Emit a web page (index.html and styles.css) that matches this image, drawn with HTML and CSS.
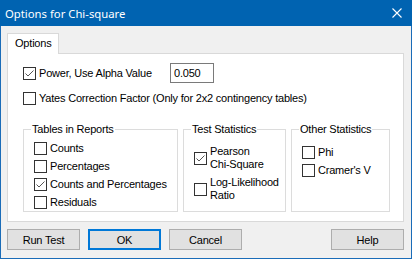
FILE: index.html
```html
<!DOCTYPE html>
<html lang="en">
<head>
    <meta charset="UTF-8">
    <title>Options for Chi-square</title>
    <link rel="stylesheet" href="styles.css">
</head>
<body>

    <div class="window">
        <div class="titlebar">
            <span class="title">Options for Chi-square</span>
            <svg class="close" width="10" height="10" viewBox="0 0 10 10">
                <path d="M0.5 0.5 L9.5 9.5 M9.5 0.5 L0.5 9.5" stroke="#fff" stroke-width="1.1" fill="none"/>
            </svg>
        </div>

        <div class="client">
            <div class="tabs">
                <div class="tab">Options</div>
            </div>

            <div class="panel">
                <div class="row first">
                    <label class="check power">
                        <span class="box"><svg width="11" height="11" viewBox="0 0 11 11"><path d="M1.5 5.5 L4 8 L9.5 2.5" stroke="#555" stroke-width="1" fill="none"/></svg></span>
                        Power, Use Alpha Value
                    </label>
                    <input class="num" type="text" value="0.050">
                </div>
                <div class="row second">
                    <label class="check"><span class="box"></span>Yates Correction Factor (Only for 2x2 contingency tables)</label>
                </div>

                <div class="groups">
                    <fieldset class="group tables">
                        <legend>Tables in Reports</legend>
                        <label class="check item"><span class="box"></span>Counts</label>
                        <label class="check item"><span class="box"></span>Percentages</label>
                        <label class="check item">
                            <span class="box"><svg width="11" height="11" viewBox="0 0 11 11"><path d="M1.5 5.5 L4 8 L9.5 2.5" stroke="#555" stroke-width="1" fill="none"/></svg></span>
                            Counts and Percentages
                        </label>
                        <label class="check item"><span class="box"></span>Residuals</label>
                    </fieldset>

                    <fieldset class="group stats">
                        <legend>Test Statistics</legend>
                        <label class="check tall">
                            <span class="box"><svg width="11" height="11" viewBox="0 0 11 11"><path d="M1.5 5.5 L4 8 L9.5 2.5" stroke="#555" stroke-width="1" fill="none"/></svg></span>
                            <span>Pearson<br>Chi-Square</span>
                        </label>
                        <label class="check tall"><span class="box"></span><span>Log-Likelihood<br>Ratio</span></label>
                    </fieldset>

                    <fieldset class="group other">
                        <legend>Other Statistics</legend>
                        <label class="check item"><span class="box"></span>Phi</label>
                        <label class="check item"><span class="box"></span>Cramer's V</label>
                    </fieldset>
                </div>
            </div>

            <div class="buttons">
                <button>Run Test</button>
                <button class="default">OK</button>
                <button>Cancel</button>
                <button class="help">Help</button>
            </div>
        </div>
    </div>

</body>
</html>
```

FILE: styles.css
```css
/* Windows style dialog */
body {
    margin: 0;
    font-family: "Liberation Sans", Arial, sans-serif;
    font-size: 11px;
    letter-spacing: -0.2px;
    color: #000;
    background-color: #f0f0f0;
}

.window {
    width: 412px;
    height: 259px;
    box-sizing: border-box;
    border: 1px solid #1a6cb8;
    border-top: none;
    background-color: #f0f0f0;
}

.titlebar {
    height: 26px;
    margin: 0 -1px;
    padding: 0 10px 0 5px;
    background-color: #0063b1;
    display: flex;
    align-items: center;
    justify-content: space-between;
}

.titlebar .title {
    color: #fff;
    font-family: "Noto Sans", "Open Sans", sans-serif;
    font-size: 11.3px;
    letter-spacing: 0;
}

.client {
    padding: 7px 0 0 6px;
}

.tabs {
    display: flex;
    height: 20px;
}

.tab {
    width: 52px;
    height: 21px;
    box-sizing: border-box;
    border: 1px solid #d9d9d9;
    border-bottom: none;
    background-color: #fff;
    padding: 2px 0 0 7px;
    line-height: 14px;
    position: relative;
    z-index: 1;
}

.panel {
    width: 397px;
    height: 169px;
    box-sizing: border-box;
    border: 1px solid #d9d9d9;
    background-color: #fff;
    padding: 9px 0 0 15px;
}

.row {
    display: flex;
    align-items: center;
}

.row.first {
    height: 20px;
}

.row.second {
    height: 18px;
    margin-top: 6px;
}

.check {
    display: flex;
    align-items: center;
    white-space: nowrap;
    line-height: 13px;
}

.check.power {
    width: 147px;
}

.box {
    width: 13px;
    height: 13px;
    box-sizing: border-box;
    border: 1px solid #333;
    background-color: #fff;
    margin-right: 3px;
    flex: none;
    display: flex;
    align-items: center;
    justify-content: center;
}

.num {
    width: 44px;
    height: 20px;
    box-sizing: border-box;
    border: 1px solid #7a7a7a;
    padding: 0 3px;
    font-family: inherit;
    font-size: 11px;
    letter-spacing: inherit;
    color: #000;
    outline: none;
}

.groups {
    display: flex;
    gap: 5px;
    margin-top: 16px;
}

.group {
    margin: 0;
    padding: 0 0 0 10px;
    height: 89px;
    box-sizing: border-box;
    border: 1px solid #dcdcdc;
    min-width: 0;
}

.group legend {
    padding: 0 1px;
    margin-left: -3px;
    line-height: 13px;
}

.group.tables {
    width: 155px;
    padding-top: 3px;
}

.group.stats {
    width: 103px;
    padding-top: 9px;
}

.group.other {
    width: 99px;
    padding-top: 7px;
}

.check.item {
    height: 18px;
}

.check.tall {
    height: 26px;
    margin-bottom: 5px;
}

.buttons {
    width: 397px;
    display: flex;
    gap: 8px;
    margin-top: 7px;
}

.buttons button {
    width: 73px;
    height: 21px;
    box-sizing: border-box;
    border: 1px solid #adadad;
    background-color: #e1e1e1;
    font-family: inherit;
    font-size: 11px;
    letter-spacing: inherit;
    color: #000;
    padding: 0;
}

.buttons button.default {
    border: 2px solid #0078d7;
}

.buttons button.help {
    margin-left: auto;
}
```
